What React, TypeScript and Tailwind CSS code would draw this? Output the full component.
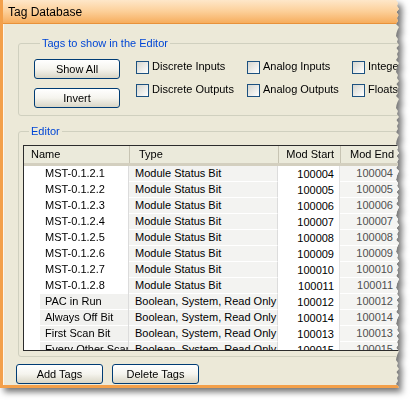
import React from 'react'

type Row = { name: string; type: string; start: string; end: string; sys?: boolean }

const rows: Row[] = [
  { name: 'MST-0.1.2.1', type: 'Module Status Bit', start: '100004', end: '100004' },
  { name: 'MST-0.1.2.2', type: 'Module Status Bit', start: '100005', end: '100005' },
  { name: 'MST-0.1.2.3', type: 'Module Status Bit', start: '100006', end: '100006' },
  { name: 'MST-0.1.2.4', type: 'Module Status Bit', start: '100007', end: '100007' },
  { name: 'MST-0.1.2.5', type: 'Module Status Bit', start: '100008', end: '100008' },
  { name: 'MST-0.1.2.6', type: 'Module Status Bit', start: '100009', end: '100009' },
  { name: 'MST-0.1.2.7', type: 'Module Status Bit', start: '100010', end: '100010' },
  { name: 'MST-0.1.2.8', type: 'Module Status Bit', start: '100011', end: '100011' },
  { name: 'PAC in Run', type: 'Boolean, System, Read Only', start: '100012', end: '100012', sys: true },
  { name: 'Always Off Bit', type: 'Boolean, System, Read Only', start: '100014', end: '100014', sys: true },
  { name: 'First Scan Bit', type: 'Boolean, System, Read Only', start: '100013', end: '100013', sys: true },
  { name: 'Every Other Scan Bit', type: 'Boolean, System, Read Only', start: '100015', end: '100015', sys: true },
]

// torn right edge of the screenshot crop
function tornEdge(h: number) {
  const pts: string[] = ['0px 0px']
  const jag = [0, 2, 1, 3, 0.5, 2.5, 1, 2, 0, 3, 1.5, 0.5]
  for (let y = 0, i = 0; y <= h; y += 3, i++) {
    pts.push(`${396 + jag[i % jag.length]}px ${y}px`)
  }
  pts.push(`398px ${h}px`, `0px ${h}px`)
  return `polygon(${pts.join(',')})`
}

function XpButton({ label, className }: { label: string; className?: string }) {
  return (
    <div
      className={
        'flex items-center justify-center h-[20px] rounded-[3px] border border-[#003c74] bg-gradient-to-b from-white via-[#f5f4ee] to-[#d9d6c6] text-black ' +
        (className ?? '')
      }
    >
      {label}
    </div>
  )
}

function Check({ label }: { label: string }) {
  return (
    <div className="flex items-center gap-[3px] h-[13px]">
      <div className="w-[13px] h-[13px] shrink-0 border border-[#1c5180] bg-gradient-to-br from-[#d6d6cf] to-white" />
      <span className="whitespace-nowrap -mt-[3px]">{label}</span>
    </div>
  )
}

export default function App() {
  return (
    <div className="w-[410px] h-[406px] bg-white overflow-hidden font-['Liberation_Sans',Arial,sans-serif] text-[11px] text-black">
      <div className="[filter:drop-shadow(4px_4px_3px_rgba(0,0,0,0.55))]">
        <div
          className="w-[402px] h-[388px] overflow-hidden bg-[#ece9d8] border-l-[3px] border-b-[3px] border-[#f3a04a] flex flex-col"
          style={{ clipPath: tornEdge(388) }}
        >
          {/* title bar */}
          <div className="h-[24px] shrink-0 flex items-center pl-[5px] bg-gradient-to-b from-[#fee7c9] via-[#fccf98] to-[#f6ad5c] border-b border-[#e8923a] text-[12px]">
            Tag Database
          </div>

          <div className="flex-1 flex flex-col pl-[14px] border-l border-[#fff6ea]">
            {/* filter group */}
            <fieldset className="mt-[13px] w-[420px] border border-[#d0d0bf] rounded-[3px] pl-[15px] pt-[9px] pb-[7px]">
              <legend className="ml-[6px] px-[2px] leading-[13px] text-[#0046d5]">Tags to show in the Editor</legend>
              <div className="flex items-start">
                <div className="flex flex-col gap-[9px] w-[86px]">
                  <XpButton label="Show All" />
                  <XpButton label="Invert" />
                </div>
                <div className="ml-[16px] mt-[2px] grid grid-cols-[111px_105px_100px] gap-y-[10px]">
                  <Check label="Discrete Inputs" />
                  <Check label="Analog Inputs" />
                  <Check label="Integers" />
                  <Check label="Discrete Outputs" />
                  <Check label="Analog Outputs" />
                  <Check label="Floats" />
                </div>
              </div>
            </fieldset>

            {/* editor group */}
            <fieldset className="mt-[9px] w-[420px] border border-[#d0d0bf] rounded-[3px] pl-[4px] pt-[7px] pb-[5px]">
              <legend className="ml-[6px] px-[2px] leading-[13px] text-[#0046d5]">Editor</legend>
              <div className="h-[206px] border border-[#2c2c2c] bg-white overflow-hidden">
                {/* header */}
                <div className="flex h-[20px] bg-[#ebeadb] border-b-[3px] border-[#d3cfbf]">
                  <div className="w-[105px] flex items-center pl-[7px]">Name</div>
                  <div className="w-[149px] flex items-center pl-[9px] border-l border-[#c7c4b3]">Type</div>
                  <div className="w-[62px] flex items-center justify-end pr-[6px] border-l border-[#c7c4b3]">Mod Start</div>
                  <div className="w-[80px] flex items-center pl-[9px] border-l border-[#c7c4b3]">Mod End</div>
                </div>
                {rows.map(r => (
                  <div key={r.name} className="flex h-[16px]">
                    <div className="w-[105px] pl-[16px] border-r border-[#dcdcdc]">
                      <div
                        className={
                          'h-full pl-[5px] flex items-center whitespace-nowrap overflow-hidden border-b border-white ' +
                          (r.sys ? 'bg-[#f1f1ef]' : 'bg-white')
                        }
                      >
                        {r.name}
                      </div>
                    </div>
                    <div className="w-[149px] pl-[6px] flex items-center whitespace-nowrap bg-[#f3f3f1] border-b border-white border-r border-r-[#dcdcdc]">
                      {r.type}
                    </div>
                    <div className="w-[62px] pr-[5px] flex items-center justify-end bg-white border-r border-[#e2e2e2]">
                      {r.start}
                    </div>
                    <div className="w-[62px] pr-[9px] flex items-center justify-end bg-[#f4f4f2] border-b border-white text-[#505050]">
                      {r.end}
                    </div>
                  </div>
                ))}
              </div>
            </fieldset>

            <div className="mt-[7px] -ml-[2px] flex gap-[9px]">
              <XpButton label="Add Tags" className="w-[87px]" />
              <XpButton label="Delete Tags" className="w-[87px]" />
            </div>
          </div>
        </div>
      </div>
    </div>
  )
}
